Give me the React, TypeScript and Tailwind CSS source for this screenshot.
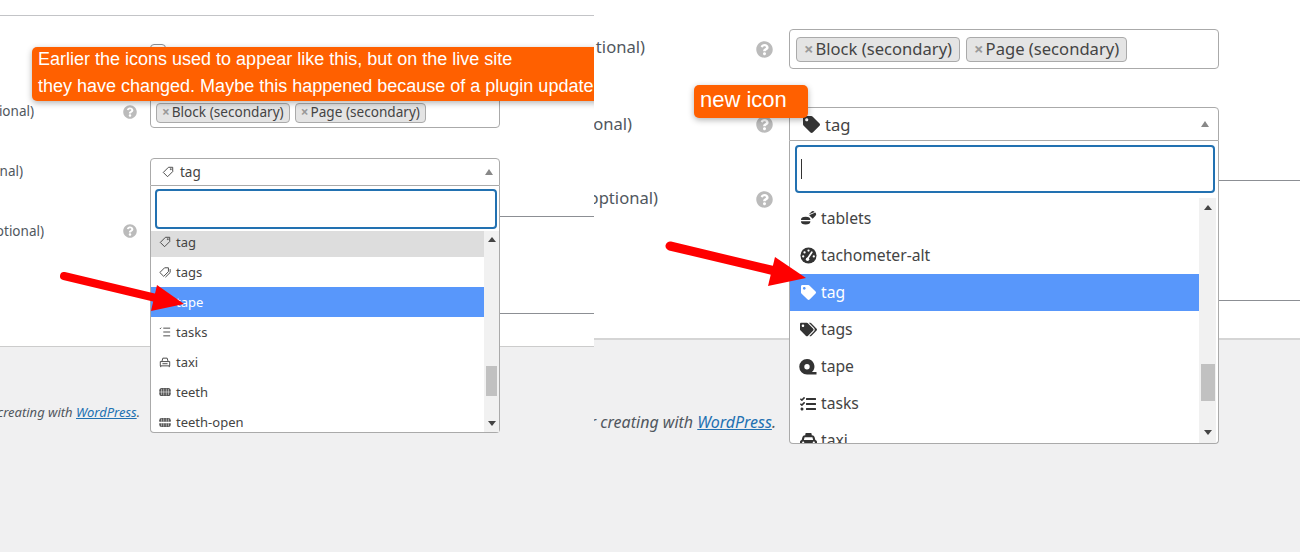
import type { ReactNode } from "react";
import { FaQuestionCircle, FaTag, FaTags, FaTasks, FaTaxi } from "react-icons/fa";

// Outline icons of the old icon set (left screenshot)
const TagLine = () => (
  <svg viewBox="0 0 14 14" className="w-[12px] h-[12px]" fill="none" stroke="currentColor" strokeWidth="1.1">
    <path d="M7.5 1.5h5v5l-6 6-5-5z" strokeLinejoin="round" />
    <circle cx="10.3" cy="3.7" r="0.6" />
  </svg>
);

const TagsLine = () => (
  <svg viewBox="0 0 14 14" className="w-[13px] h-[13px]" fill="none" stroke="currentColor" strokeWidth="1.1">
    <path d="M6.5 1.5h4.5v4.5l-5.5 5.5-4.5-4.5z" strokeLinejoin="round" />
    <path d="M13 3v4l-5.5 5.5" />
  </svg>
);

const TapeLine = () => (
  <svg viewBox="0 0 14 14" className="w-[12px] h-[12px]" fill="none" stroke="currentColor" strokeWidth="1.1">
    <circle cx="6" cy="7" r="4.5" />
    <path d="M6 11.5h7" />
  </svg>
);

const TasksLine = () => (
  <svg viewBox="0 0 14 14" className="w-[12px] h-[12px]" fill="none" stroke="currentColor" strokeWidth="1.1">
    <path d="M1 3.5l1.5-1.5M5 2.5h8M5 7h8M5 11.5h8" />
  </svg>
);

const TaxiLine = () => (
  <svg viewBox="0 0 14 14" className="w-[12px] h-[12px]" fill="none" stroke="currentColor" strokeWidth="1.1">
    <path d="M3.5 6l1-3.5h5l1 3.5M1.5 6.5h11v5h-11zM2 11.5v1.5M12 11.5v1.5M4 9h6" strokeLinejoin="round" />
  </svg>
);

const TeethLine = () => (
  <svg viewBox="0 0 14 10" className="w-[14px] h-[10px]" fill="#555" stroke="#fff" strokeWidth="0.6">
    <rect x="0.3" y="0.3" width="13.4" height="9.4" rx="3" stroke="none" />
    <path d="M0 5h14M3 1.5v7M5.5 1v8M8.5 1v8M11 1.5v7" fill="none" />
  </svg>
);

const TeethOpenLine = () => (
  <svg viewBox="0 0 14 11" className="w-[14px] h-[11px]" fill="#555" stroke="#fff" strokeWidth="0.6">
    <path d="M3 0.3h8a2.7 2.7 0 0 1 2.7 2.7v1.6H0.3V3A2.7 2.7 0 0 1 3 0.3z" stroke="none" />
    <path d="M0.3 6.4h13.4v1.6A2.7 2.7 0 0 1 11 10.7H3A2.7 2.7 0 0 1 0.3 8z" stroke="none" />
    <path d="M3 1v3.6M5.5 0.5v4M8.5 0.5v4M11 1v3.6M3 6.4v3.6M5.5 6.4v4M8.5 6.4v4M11 6.4v3.6" fill="none" />
  </svg>
);

// Solid icons of the new icon set (right screenshot), drawn where the package's differ
const Tablets = () => (
  <svg viewBox="0 0 18 18" className="w-[17px] h-[17px]" fill="currentColor">
    <path d="M1 10.5a5 3.4 0 0 1 10 0zM1 12h10a5 3.4 0 0 1-10 0z" />
    <path d="M9 5.2l2.8-2.8a2.6 2.6 0 0 1 3.7 0zM16.2 3.1a2.6 2.6 0 0 1 0 3.7l-2.8 2.8-3.7-3.7z" transform="translate(0 -0.4)" />
  </svg>
);

const Tachometer = () => (
  <svg viewBox="0 0 18 18" className="w-[17px] h-[17px]">
    <circle cx="9" cy="9" r="8.5" fill="currentColor" />
    <g fill="#fff">
      <circle cx="9" cy="3.8" r="1.2" />
      <circle cx="4.8" cy="5.8" r="1.2" />
      <circle cx="3.4" cy="10" r="1.2" />
      <circle cx="14.6" cy="10" r="1.2" />
    </g>
    <path d="M8 12.5L12.5 5.5" stroke="#fff" strokeWidth="1.8" strokeLinecap="round" />
    <circle cx="8" cy="13" r="1.8" fill="#fff" />
  </svg>
);

const Tape = () => (
  <svg viewBox="0 0 18 18" className="w-[18px] h-[18px]" fill="currentColor">
    <path fillRule="evenodd" d="M8 1a7.5 7.5 0 0 1 5 13h4.5v2.5H8A7.7 7.7 0 0 1 8 1zM8 6a2.7 2.7 0 1 0 0 5.4A2.7 2.7 0 0 0 8 6z" />
  </svg>
);

const Chip = ({ label, className }: { label: string; className: string }) => (
  <span className={`flex items-center bg-[#e4e4e4] border border-[#aaa] rounded-[4px] text-[#444] ${className}`}>
    <span className="text-[#999] font-bold mr-[2px]">×</span>
    {label}
  </span>
);

const Caret = ({ down, muted, className }: { down?: boolean; muted?: boolean; className?: string }) => (
  <span
    className={`block w-0 h-0 border-x-[4px] border-x-transparent ${
      down ? "border-t-[5px] border-t-[#444]" : muted ? "border-b-[6px] border-b-[#888]" : "border-b-[5px] border-b-[#444]"
    } ${className ?? ""}`}
  />
);

const Label = ({ text, className }: { text: string; className: string }) => (
  <div className={`flex justify-end overflow-hidden whitespace-nowrap text-[#50575e] shrink-0 ${className}`}>{text}</div>
);

type Option = { icon: ReactNode; label: string; state?: "selected" | "hover" };

const oldOptions: Option[] = [
  { icon: <TagLine />, label: "tag", state: "selected" },
  { icon: <TagsLine />, label: "tags" },
  { icon: <TapeLine />, label: "tape", state: "hover" },
  { icon: <TasksLine />, label: "tasks" },
  { icon: <TaxiLine />, label: "taxi" },
  { icon: <TeethLine />, label: "teeth" },
  { icon: <TeethOpenLine />, label: "teeth-open" },
];

const newOptions: Option[] = [
  { icon: <Tablets />, label: "tablets" },
  { icon: <Tachometer />, label: "tachometer-alt" },
  { icon: <FaTag size={15} />, label: "tag", state: "hover" },
  { icon: <FaTags size={17} />, label: "tags" },
  { icon: <Tape />, label: "tape" },
  { icon: <FaTasks size={16} />, label: "tasks" },
  { icon: <FaTaxi size={17} />, label: "taxi" },
];

const rowColor = (state?: Option["state"]) =>
  state === "hover" ? "bg-[#5897fb] text-white" : state === "selected" ? "bg-[#ddd] text-[#444]" : "text-[#444]";

const OldPanel = () => (
  <div className="relative w-[594px] shrink-0 h-full flex flex-col overflow-hidden text-[13.5px]">
    <div className="h-[347px] shrink-0 bg-white border-b border-[#ccc] pt-[15px] flex flex-col">
      <div className="border-t border-[#c3c4c7]" />

      <div className="mt-[28px] ml-[150px] w-[16px] h-[16px] border border-[#8c8f94] rounded-[4px] shrink-0" />

      <div className="mt-[36px] flex items-center h-[32px] shrink-0">
        <Label text="ional)" className="w-[34px] mb-[2px]" />
        <FaQuestionCircle size={14} className="ml-[89px] text-[#bbb]" />
        <div className="ml-[13px] w-[350px] h-[32px] border border-[#aaa] rounded-[4px] bg-white flex items-center gap-[5px] pl-[5px] pt-[1px]">
          <Chip label="Block (secondary)" className="h-[20px] pl-[5px] pr-[5px] text-[13.6px]" />
          <Chip label="Page (secondary)" className="h-[20px] pl-[5px] pr-[5px] text-[13.6px]" />
        </div>
      </div>

      <div className="mt-[30px] flex items-center h-[28px] shrink-0">
        <Label text="nal)" className="w-[23px] mb-[2px]" />
        <div className="relative ml-[127px] w-[350px] h-[28px]">
          <div className="h-full border border-[#aaa] rounded-t-[4px] bg-white flex items-center pl-[11px] pr-[6px] text-[#444] gap-[6px]">
            <TagLine />
            <span className="mt-[1px]">tag</span>
            <Caret muted className="ml-auto" />
          </div>
          <div className="absolute z-10 top-full left-0 w-full h-[247px] bg-white border-x border-b border-[#aaa] rounded-b-[4px] flex flex-col">
            <div className="ml-[4px] mr-[2px] mt-[3px] h-[40px] shrink-0 border-2 border-[#2271b1] rounded-[4px] bg-white" />
            <div className="mt-[2px] flex-1 flex min-h-0 text-[13px]">
              <div className="flex-1 overflow-hidden">
                <div className="mt-[-4px]">
                  {oldOptions.map((o) => (
                    <div key={o.label} className={`h-[30px] flex items-center pl-[8px] gap-[5px] ${rowColor(o.state)}`}>
                      <span className="w-[12px] flex justify-center">{o.icon}</span>
                      <span className="mt-[1px]">{o.label}</span>
                    </div>
                  ))}
                </div>
              </div>
              <div className="w-[15px] bg-[#f1f1f1] flex flex-col items-center pt-[6px] pb-[6px]">
                <Caret />
                <div className="mt-[124px] w-[11px] h-[30px] bg-[#c1c1c1]" />
                <Caret down className="mt-auto" />
              </div>
            </div>
          </div>
        </div>
      </div>

      <div className="mt-[30px] ml-[497px] border-t border-[#8c8f94]" />

      <div className="flex items-center h-[28px] shrink-0">
        <Label text="otional)" className="w-[44px]" />
        <FaQuestionCircle size={14} className="ml-[79px] text-[#bbb]" />
      </div>

      <div className="mt-[68px] ml-[497px] border-t border-[#8c8f94]" />
    </div>

    <div className="flex-1 bg-[#f0f0f1] pt-[56px]">
      <div className="w-[140px] flex justify-end overflow-hidden whitespace-nowrap italic text-[13px] text-[#50575e]">
        <span>
          creating with <span className="text-[#2271b1] underline">WordPress</span>.
        </span>
      </div>
    </div>

    {/* Annotation over the form */}
    <div className="absolute z-20 left-[32px] top-[47px] w-[580px] h-[54px] bg-[#ff6000] rounded-[5px] pl-[6px] shadow-[0_2px_6px_rgba(0,0,0,0.3)] text-white text-[18px] leading-[27px] whitespace-nowrap font-['Liberation_Sans',sans-serif]">
      <div className="-mt-[1px]">
        Earlier the icons used to appear like this, but on the live site
        <br />
        they have changed. Maybe this happened because of a plugin update
      </div>
    </div>

    <svg className="absolute z-20 left-0 top-0 w-[594px] h-[552px] pointer-events-none" viewBox="0 0 594 552">
      <path d="M64 276 L156 298" stroke="#f00" strokeWidth="8" strokeLinecap="round" />
      <path d="M157 285 L151 311 L184 304 Z" fill="#f00" />
    </svg>
  </div>
);

const NewPanel = () => (
  <div className="relative flex-1 h-full flex flex-col overflow-hidden text-[16.6px]">
    <div className="h-[340px] shrink-0 bg-white border-b-2 border-[#d5d5d5] pt-[29px] flex flex-col">
      <div className="flex items-center h-[40px] shrink-0">
        <Label text="tional)" className="w-[51px] mb-[4px]" />
        <FaQuestionCircle size={17} className="ml-[111px] text-[#bbb]" />
        <div className="ml-[16px] w-[430px] h-[40px] border border-[#aaa] rounded-[4px] bg-white flex items-center gap-[6px] pl-[6px]">
          <Chip label="Block (secondary)" className="h-[25px] px-[7px] text-[16.6px]" />
          <Chip label="Page (secondary)" className="h-[25px] px-[7px] text-[16.6px]" />
        </div>
      </div>

      <div className="mt-[38px] flex items-center h-[34px] shrink-0">
        <Label text="onal)" className="w-[38px]" />
        <FaQuestionCircle size={17} className="ml-[124px] text-[#bbb]" />
        <div className="relative ml-[16px] w-[430px] h-[34px]">
          <div className="h-full border border-[#aaa] rounded-t-[4px] bg-white flex items-center pl-[13px] pr-[9px] text-[#444] gap-[5px]">
            <FaTag size={17} className="text-[#333]" />
            <span className="mt-[2px]">tag</span>
            <Caret muted className="ml-auto" />
          </div>
          <div className="absolute z-10 top-full left-0 w-full h-[303px] bg-white border-x border-b border-[#aaa] rounded-b-[4px] flex flex-col">
            <div className="ml-[5px] mr-[3px] mt-[4px] h-[48px] shrink-0 border-2 border-[#2271b1] rounded-[4px] bg-white flex items-center pl-[4px]">
              <span className="block w-[1px] h-[20px] bg-[#333]" />
            </div>
            <div className="mt-[5px] flex-1 flex min-h-0 text-[15.7px]">
              <div className="flex-1 overflow-hidden">
                <div className="pt-[2px]">
                  {newOptions.map((o) => (
                    <div key={o.label} className={`h-[37px] flex items-center pl-[9px] gap-[4px] ${rowColor(o.state)}`}>
                      <span className={`w-[18px] flex justify-center ${o.state ? "text-white" : "text-[#333]"}`}>{o.icon}</span>
                      <span className="mt-[1px]">{o.label}</span>
                    </div>
                  ))}
                </div>
              </div>
              <div className="w-[17px] mr-[2px] bg-[#f1f1f1] flex flex-col items-center pt-[7px] pb-[8px]">
                <Caret />
                <div className="mt-[154px] w-[14px] h-[37px] bg-[#c1c1c1]" />
                <Caret down className="mt-auto" />
              </div>
            </div>
          </div>
        </div>
      </div>

      <div className="mt-[39px] ml-[625px] border-t border-[#8c8f94]" />

      <div className="flex items-center h-[36px] shrink-0">
        <Label text="optional)" className="w-[64px] mb-[2px]" />
        <FaQuestionCircle size={17} className="ml-[98px] text-[#bbb]" />
      </div>

      <div className="mt-[83px] ml-[625px] border-t border-[#8c8f94]" />
    </div>

    <div className="flex-1 bg-[#f0f0f1] pt-[70px]">
      <div className="w-[182px] flex justify-end overflow-hidden whitespace-nowrap italic text-[16px] text-[#50575e]">
        <span>
          for creating with <span className="text-[#2271b1] underline">WordPress</span>.
        </span>
      </div>
    </div>

    {/* Annotation over the form */}
    <div className="absolute z-20 left-[100px] top-[85px] w-[114px] h-[33px] bg-[#ff6000] rounded-[5px] pl-[6px] shadow-[0_2px_6px_rgba(0,0,0,0.3)] text-white text-[22px] leading-[29px] font-['Liberation_Sans',sans-serif]">
      new icon
    </div>

    <svg className="absolute z-20 left-0 top-0 w-[706px] h-[552px] pointer-events-none" viewBox="594 0 706 552">
      <path d="M670 246 L775 271" stroke="#f00" strokeWidth="9" strokeLinecap="round" />
      <path d="M775 257 L768 286 L806 278 Z" fill="#f00" />
    </svg>
  </div>
);

export default function App() {
  return (
    <div className="w-[1300px] h-[552px] flex overflow-hidden bg-[#f0f0f1] font-['Noto_Sans',sans-serif]">
      <OldPanel />
      <NewPanel />
    </div>
  );
}
